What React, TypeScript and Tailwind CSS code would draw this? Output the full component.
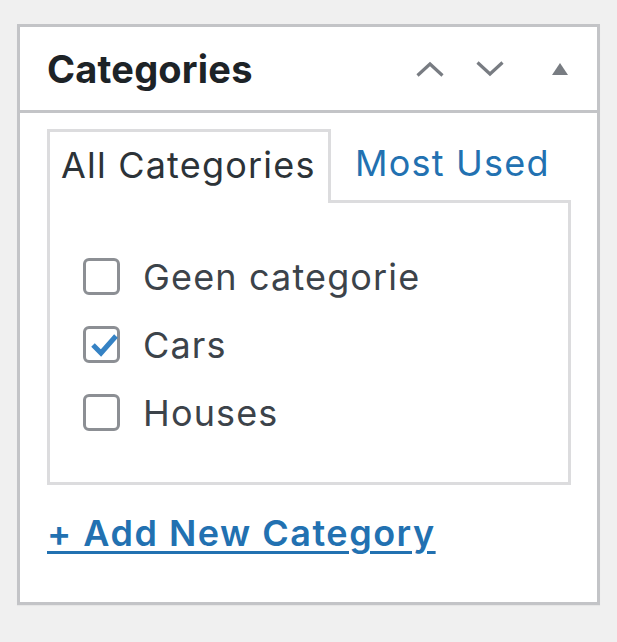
import React from 'react';

const font = { fontFamily: 'Inter, "Liberation Sans", sans-serif' };

function Checkbox({ checked }: { checked?: boolean }) {
  return (
    <span className="relative flex h-[37px] w-[37px] shrink-0 items-center justify-center rounded-[6px] border-[3px] border-[#8c8f94] bg-white">
      {checked && (
        <svg className="absolute left-[-3px] top-[-3px]" width="40" height="40" viewBox="0 0 40 40">
          <polyline points="10,19 18,27 33,10" fill="none" stroke="#3582c4" strokeWidth="5" strokeLinejoin="miter" />
        </svg>
      )}
    </span>
  );
}

export default function App() {
  const cats = [
    { name: 'Geen categorie', checked: false },
    { name: 'Cars', checked: true },
    { name: 'Houses', checked: false },
  ];

  return (
    <div className="h-[642px] w-[617px] bg-[#f0f0f0] pl-[17px] pt-[24px]" style={font}>
      <div className="h-[581px] w-[583px] border-[3px] border-[#c3c4c7] bg-white shadow-[0_1px_1px_rgba(0,0,0,0.04)]">
        {/* header */}
        <div className="flex h-[86px] items-center border-b-[3px] border-[#c3c4c7] pl-[27px] pr-[29px]">
          <h2 className="flex-1 text-[38px] font-bold leading-none tracking-[0.2px] text-[#1d2327]">Categories</h2>
          <div className="flex items-center">
            <svg width="28" height="16" viewBox="0 0 28 16" className="mr-[32px]">
              <polyline points="1.5,14.5 14,3 26.5,14.5" fill="none" stroke="#787c82" strokeWidth="3.2" />
            </svg>
            <svg width="28" height="16" viewBox="0 0 28 16" className="mr-[48px]">
              <polyline points="1.5,1.5 14,13 26.5,1.5" fill="none" stroke="#787c82" strokeWidth="3.2" />
            </svg>
            <svg width="16" height="12" viewBox="0 0 16 12">
              <polygon points="0,12 8,0 16,12" fill="#787c82" />
            </svg>
          </div>
        </div>

        {/* body */}
        <div className="pl-[27px] pr-[26px] pt-[16px]">
          <div className="flex items-end">
            <div className="relative z-10 -mb-[3px] flex h-[74px] w-[284px] items-center border-[3px] border-b-0 border-[#dcdcde] bg-white pl-[11px]">
              <span className="-mt-[6px] text-[36px] leading-none tracking-[1.2px] text-[#2c3338]">All Categories</span>
            </div>
            <a className="ml-[24px] flex h-[71px] items-center pb-[3px] text-[36px] leading-none tracking-[1.2px] text-[#2271b1]">Most Used</a>
          </div>
          <div className="flex h-[285px] flex-col gap-[31px] border-[3px] border-[#dcdcde] pl-[33px] pt-[55px]">
            {cats.map((c) => (
              <label key={c.name} className="flex h-[37px] items-center gap-[23px]">
                <Checkbox checked={c.checked} />
                <span className="text-[36px] leading-none tracking-[1.15px] text-[#3c434a]">{c.name}</span>
              </label>
            ))}
          </div>
          <a className="mt-[30px] block text-[36px] font-semibold leading-none tracking-[1.5px] text-[#2271b1] underline decoration-[3px] underline-offset-[5px]">
            + Add New Category
          </a>
        </div>
      </div>
    </div>
  );
}
